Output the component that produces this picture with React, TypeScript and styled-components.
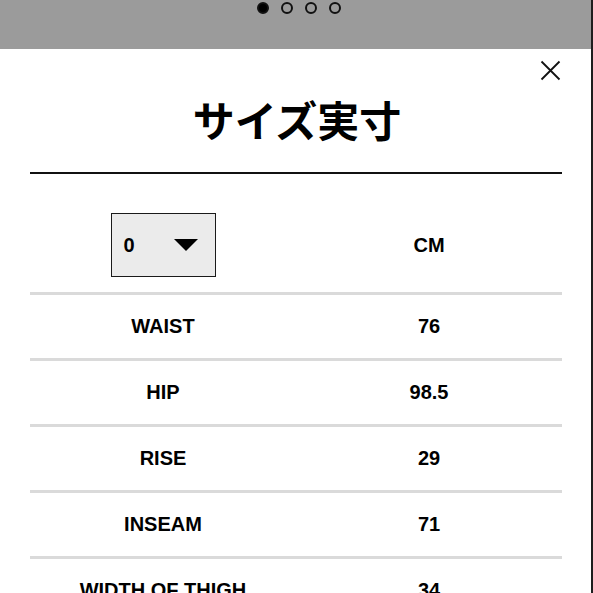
import React from "react";
import styled, { createGlobalStyle } from "styled-components";

const Global = createGlobalStyle`
  html, body { margin: 0; padding: 0; background: #fff; }
  body { font-family: "Liberation Sans", Arial, "Noto Sans CJK JP", sans-serif; }
`;

const Page = styled.div`
  width: 591px;
  height: 593px;
  overflow: hidden;
  border-right: 2px solid #1e1e1e;
  background: #fff;
`;

const TopBar = styled.div`
  height: 49px;
  background: #9b9b9b;
  display: flex;
  justify-content: center;
  align-items: flex-start;
  gap: 12px;
  padding: 2px 0 0 6px;
  box-sizing: border-box;
`;

const Dot = styled.span<{ $active?: boolean }>`
  width: 12px;
  height: 12px;
  border-radius: 50%;
  box-sizing: border-box;
  border: 2px solid #111;
  background: ${(p) => (p.$active ? "#000" : "transparent")};
`;

const Modal = styled.div`
  position: relative;
  padding: 49px 29px 0 30px;
`;

const Close = styled.button`
  position: absolute;
  top: 11px;
  right: 30px;
  width: 21px;
  height: 21px;
  padding: 0;
  border: none;
  background: none;
  display: flex;
`;

const Title = styled.h1`
  margin: 0;
  height: 42px;
  font-family: "Noto Sans CJK JP", sans-serif;
  font-size: 42px;
  line-height: 42px;
  font-weight: 700;
  text-align: center;
  color: #000;
  padding-left: 2px;
`;

const Rule = styled.div`
  margin-top: 32px;
  height: 2px;
  background: #111;
`;

const HeaderRow = styled.div`
  display: grid;
  grid-template-columns: 1fr 1fr;
  align-items: center;
  padding: 39px 0 15px;
`;

const Cell = styled.div`
  display: flex;
  justify-content: center;
  align-items: center;
  font-size: 20px;
  font-weight: 700;
  color: #000;
`;

const Select = styled.div`
  width: 105px;
  height: 64px;
  box-sizing: border-box;
  border: 1.5px solid #1a1a1a;
  background: #ebebeb;
  display: flex;
  align-items: center;
  justify-content: space-between;
  padding: 0 17px 0 12px;
  font-size: 20px;
  font-weight: 700;
`;

const Caret = styled.span`
  width: 0;
  height: 0;
  border-left: 12px solid transparent;
  border-right: 12px solid transparent;
  border-top: 12px solid #000;
`;

const Row = styled.div`
  display: grid;
  grid-template-columns: 1fr 1fr;
  height: 63px;
  border-top: 3px solid #dadada;
`;

const rows: [string, string][] = [
  ["WAIST", "76"],
  ["HIP", "98.5"],
  ["RISE", "29"],
  ["INSEAM", "71"],
  ["WIDTH OF THIGH", "34"],
];

export default function App() {
  return (
    <Page>
      <Global />
      <TopBar>
        <Dot $active />
        <Dot />
        <Dot />
        <Dot />
      </TopBar>
      <Modal>
        <Close aria-label="close">
          <svg width="21" height="21" viewBox="0 0 21 21">
            <path d="M1.5 1.5 L19.5 19.5 M19.5 1.5 L1.5 19.5" stroke="#111" strokeWidth="1.8" fill="none" />
          </svg>
        </Close>
        <Title>サイズ実寸</Title>
        <Rule />
        <HeaderRow>
          <Cell>
            <Select>
              <span>0</span>
              <Caret />
            </Select>
          </Cell>
          <Cell>CM</Cell>
        </HeaderRow>
        {rows.map(([k, v]) => (
          <Row key={k}>
            <Cell>{k}</Cell>
            <Cell>{v}</Cell>
          </Row>
        ))}
      </Modal>
    </Page>
  );
}
